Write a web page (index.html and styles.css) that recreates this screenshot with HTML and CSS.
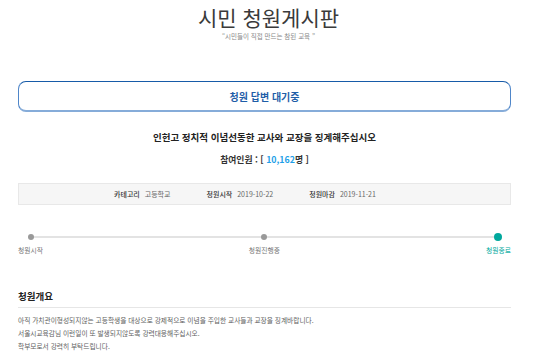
FILE: index.html
```html
<!DOCTYPE html>
<html lang="ko">

<head>
    <meta charset="UTF-8">
    <meta name="viewport" content="width=device-width, initial-scale=1.0">
    <link rel="stylesheet" href="styles.css">
</head>

<body>
    <div class="page">
        <header class="board-head">
            <h1>시민 청원게시판</h1>
            <p class="motto">“시민들이 직접 만드는 참된 교육 ”</p>
        </header>

        <div class="status-box">청원 답변 대기중</div>

        <h2 class="petition-title">인헌고 정치적 이념선동한 교사와 교장을 징계해주십시오</h2>
        <p class="count">참여인원 : [ <span class="num">10,162</span>명 ]</p>

        <div class="meta">
            <span class="meta-item"><b>카테고리</b> 고등학교</span>
            <span class="meta-item"><b>청원시작</b> 2019-10-22</span>
            <span class="meta-item"><b>청원마감</b> 2019-11-21</span>
        </div>

        <div class="timeline">
            <div class="step">
                <span class="dot"></span>
                <span class="step-label">청원시작</span>
            </div>
            <div class="step">
                <span class="dot"></span>
                <span class="step-label">청원진행중</span>
            </div>
            <div class="step done">
                <span class="dot"></span>
                <span class="step-label">청원종료</span>
            </div>
        </div>

        <section class="summary">
            <h3>청원개요</h3>
            <p>아직 가치관이형성되지않는 고등학생을 대상으로 강제적으로 이념을 주입한 교사들과 교장을 징계바랍니다.</p>
            <p>서울시교육감님 이런일이 또 발생되지않도록 강력대응해주십시오.</p>
            <p>학부모로서 강력히 부탁드립니다.</p>
            <p>&nbsp;</p>
        </section>
    </div>
</body>
</html>
```

FILE: styles.css
```css
body {
    margin: 0;
    font-family: "Noto Sans CJK KR", "Noto Sans", sans-serif;
    color: #333;
    background: #fff;
    overflow: hidden;
}
.page {
    width: 493px;
    margin-left: 18px;
    padding-top: 6px;
}
.board-head {
    text-align: center;
}
.board-head h1 {
    margin: 0;
    font-size: 21px;
    line-height: 22px;
    font-weight: 400;
    color: #3a3a3a;
    padding-left: 8px;
}
.motto {
    margin: 3px 0 0;
    font-size: 6.5px;
    line-height: 10px;
    color: #888;
    padding-left: 8px;
}
.status-box {
    margin-top: 40px;
    height: 28px;
    border: 1px solid #4f86c9;
    border-top-color: #175ba8;
    border-bottom: 2px solid #86acd9;
    border-radius: 8px;
    display: flex;
    align-items: center;
    justify-content: center;
    font-size: 10px;
    font-weight: 700;
    color: #1f5ea8;
}
.petition-title {
    margin: 18px 0 0;
    text-align: center;
    font-size: 9.5px;
    line-height: 14px;
    font-weight: 700;
    color: #222;
}
.count {
    margin: 10px 0 0;
    text-align: center;
    font-size: 8.8px;
    line-height: 12px;
    font-weight: 700;
    color: #333;
}
.count .num {
    color: #1e9fe8;
}
.meta {
    margin-top: 17px;
    height: 20px;
    background: #f6f6f6;
    border: 1px solid #e8e8e8;
    display: flex;
    align-items: center;
    gap: 36px;
    padding-left: 95px;
    font-size: 7px;
    color: #666;
}
.meta-item b {
    color: #333;
    font-weight: 500;
    margin-right: 3px;
}
.timeline {
    position: relative;
    margin-top: 28px;
    display: flex;
    justify-content: space-between;
}
.timeline::before {
    content: "";
    position: absolute;
    left: 13px;
    right: 14px;
    top: 3px;
    height: 2px;
    background: #e3e3e3;
}
.step {
    position: relative;
    display: flex;
    flex-direction: column;
    align-items: center;
    gap: 4px;
}
.dot {
    width: 6px;
    height: 6px;
    margin: 1px 0;
    border-radius: 50%;
    background: #999;
}
.step-label {
    font-size: 6.8px;
    line-height: 10px;
    color: #777;
}
.step.done .dot {
    width: 8px;
    height: 8px;
    margin: 0;
    background: #00a89d;
}
.step.done .step-label {
    color: #00a89d;
}
.summary {
    margin-top: 34px;
}
.summary h3 {
    margin: 0 0 6px;
    padding-bottom: 4px;
    border-bottom: 1px solid #e6e6e6;
    font-size: 9.5px;
    line-height: 14px;
    font-weight: 700;
    color: #222;
}
.summary p {
    margin: 0;
    font-size: 6.7px;
    line-height: 13px;
    color: #5e5e5e;
}
```
